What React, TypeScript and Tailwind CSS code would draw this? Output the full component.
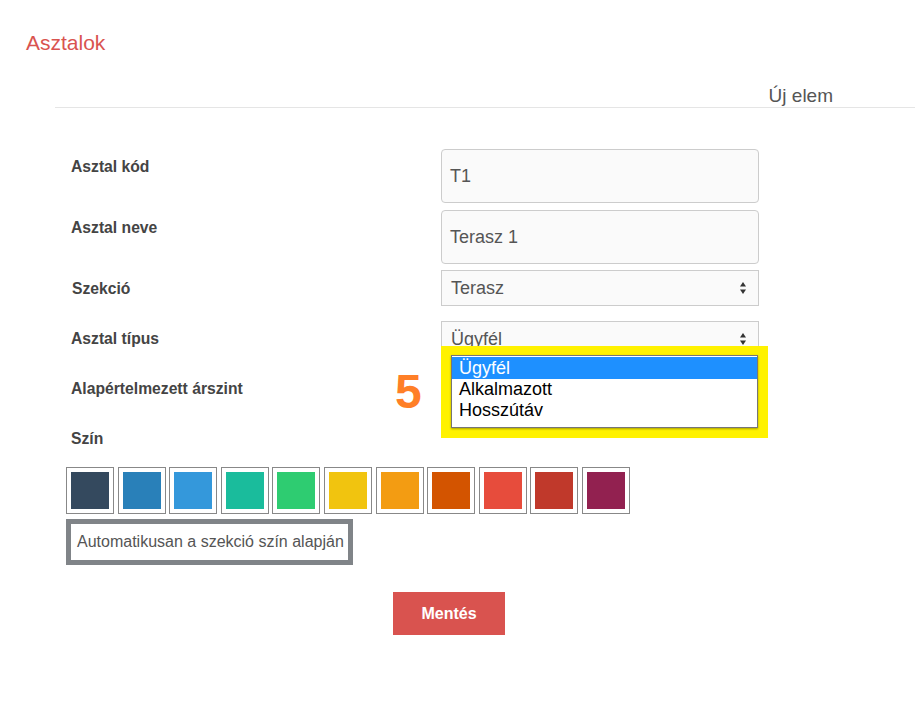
import React from "react";

const swatches = [
  "#34495e",
  "#2980b9",
  "#3498db",
  "#1abc9c",
  "#2ecc71",
  "#f1c40f",
  "#f39c12",
  "#d35400",
  "#e74c3c",
  "#c0392b",
  "#922150",
];

function Arrows() {
  return (
    <svg width="8" height="14" viewBox="0 0 8 14" className="absolute right-[11px] top-1/2 -translate-y-1/2">
      <path d="M4 1 L7 5.5 L1 5.5 Z" fill="#333" />
      <path d="M4 13 L7 8.5 L1 8.5 Z" fill="#333" />
    </svg>
  );
}

function FakeSelect({ value }: { value: string }) {
  return (
    <div className="relative w-[318px] h-[36px] border border-[#cccccc] bg-[#fafafa] pl-[9px] flex items-center text-[18px] text-[#555]">
      {value}
      <Arrows />
    </div>
  );
}

function TextBox({ value }: { value: string }) {
  return (
    <div className="w-[318px] h-[54px] border border-[#cccccc] rounded-[4px] bg-[#fafafa] pl-[8px] flex items-center text-[18px] text-[#555]">
      {value}
    </div>
  );
}

function Label({ children }: { children: React.ReactNode }) {
  return (
    <div className="w-[386px] pl-[16px] pt-[8px] text-[15.7px] leading-5 font-bold text-[#444]">
      {children}
    </div>
  );
}

export default function App() {
  return (
    <div
      className="w-[915px] h-[706px] bg-white overflow-hidden"
      style={{ fontFamily: '"Liberation Sans", Arial, sans-serif' }}
    >
      <div className="pl-[26px] pt-[31px] text-[21px] leading-6 text-[#d9534f]">Asztalok</div>

      <div className="ml-[55px] mt-[31px] border-b border-[#e5e5e5] pb-[1px] flex justify-end pr-[82px]">
        <span className="text-[19px] leading-5 text-[#555]">Új elem</span>
      </div>

      <div className="ml-[55px] mt-[41px]">
        <div className="flex">
          <Label>Asztal kód</Label>
          <TextBox value="T1" />
        </div>
        <div className="flex mt-[7px]">
          <Label>Asztal neve</Label>
          <TextBox value="Terasz 1" />
        </div>
        <div className="flex mt-[6px]">
          <Label>
            <div className="pt-[1px] pl-[1px]">Szekció</div>
          </Label>
          <FakeSelect value="Terasz" />
        </div>
        <div className="flex mt-[15px] relative">
          <Label>Asztal típus</Label>
          <FakeSelect value="Ügyfél" />

          {/* annotated dropdown overlay */}
          <div className="absolute left-[386px] top-[25px] w-[327px] h-[92px] border-[10px] border-[#fff200] border-t-[9px] bg-[#fff200] z-10">
            <div className="h-full bg-white border border-[#767676] shadow-[0_1px_2px_rgba(0,0,0,0.35)] pt-[1px]">
              <div className="bg-[#1e90ff] text-white text-[18px] leading-[22px] pl-[7px]">Ügyfél</div>
              <div className="text-black text-[18px] leading-[21px] pl-[7px]">Alkalmazott</div>
              <div className="text-black text-[18px] leading-[21px] pl-[7px]">Hosszútáv</div>
            </div>
          </div>
          <div className="absolute left-[340px] top-[47px] text-[48px] leading-none font-bold text-[#ff7f27]">
            5
          </div>
        </div>
        <div className="flex mt-[14px]">
          <Label>Alapértelmezett árszint</Label>
          <div className="w-[318px] h-[36px]" />
        </div>
        <div className="flex mt-[14px]">
          <Label>Szín</Label>
        </div>

        <div className="flex gap-[3.6px] ml-[11px] mt-[18px]">
          {swatches.map((c) => (
            <div key={c} className="w-[48px] h-[47px] border border-[#888] bg-white p-[4px]">
              <div className="w-full h-full" style={{ backgroundColor: c }} />
            </div>
          ))}
        </div>

        <div className="ml-[11px] mt-[5px] w-[287px] h-[46px] border-[5px] border-[#808488] flex items-center pl-[6px] text-[16px] text-[#555] whitespace-nowrap">
          Automatikusan a szekció szín alapján
        </div>

        <div className="ml-[338px] mt-[27px] w-[112px] h-[43px] bg-[#d9534f] flex items-center justify-center text-white text-[16px] font-bold">
          Mentés
        </div>
      </div>
    </div>
  );
}
